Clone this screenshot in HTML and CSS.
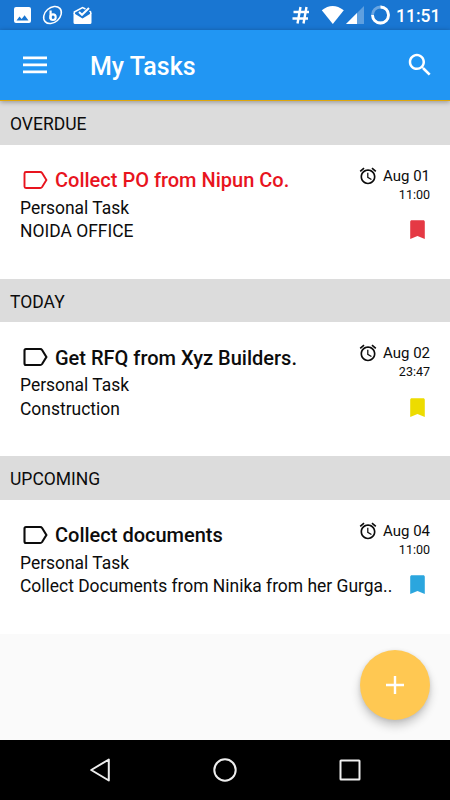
FILE: index.html
```html
<!DOCTYPE html>
<html lang="en">
<head>
<meta charset="utf-8">
<title>My Tasks</title>
<link rel="stylesheet" href="styles.css">
</head>
<body>
<svg class="defs" aria-hidden="true">
  <symbol id="alarm" viewBox="0 0 24 24"><path d="M22 5.72l-4.6-3.86-1.29 1.53 4.6 3.86L22 5.72zM7.88 3.39L6.6 1.86 2 5.71l1.29 1.53 4.59-3.85zM12.5 8H11v6l4.75 2.85.75-1.23-4-2.37V8zM12 4c-4.97 0-9 4.03-9 9s4.02 9 9 9c4.97 0 9-4.03 9-9s-4.03-9-9-9zm0 16c-3.87 0-7-3.13-7-7s3.13-7 7-7 7 3.13 7 7-3.13 7-7 7z"/></symbol>
  <symbol id="label" viewBox="0 0 30 30"><path d="M6 7H20.200Q21.400 7 22.100 8L26.400 15L22.100 22Q21.400 23 20.200 23H6Q4.500 23 4.500 21.500V8.500Q4.500 7 6 7Z"/></symbol>
  <symbol id="bookmark" viewBox="0 0 24 24"><path d="M17.500 3H6.500c-.900 0-1.500.600-1.500 1.500V21l7-2.700 7 2.700V4.500c0-.900-.600-1.500-1.500-1.500z"/></symbol>
</svg>
<div class="screen">
  <div class="status">
    <svg class="status-left" width="92" height="30" viewBox="0 0 92 30">
      <path fill="#fff" fill-rule="evenodd" d="M16 7H29Q31 7 31 9V21Q31 23 29 23H16Q14 23 14 21V9Q14 7 16 7ZM16.500 20.500H28.500L24.600 15.200L21.700 19L19.500 16.500Z"/>
      <g fill="none" stroke="#fff">
        <ellipse cx="52.500" cy="15" rx="9.900" ry="7.400" stroke-width="1.500" transform="rotate(-42 52.500 15)"/>
        <path stroke-width="2.200" d="M50.600 10.500V19"/>
        <ellipse cx="53" cy="17.200" rx="2.700" ry="2.800" stroke-width="2.100"/>
      </g>
      <path fill="#fff" d="M73.500 13L82.500 18.500L91.500 13V22.500Q91.500 24 90 24H75Q73.500 24 73.500 22.500Z"/>
      <path fill="none" stroke="#fff" stroke-width="1.500" d="M74.300 14V12L82.500 7.500L85.500 9M90.700 14V12L89.500 11"/>
      <path fill="none" stroke="#fff" stroke-width="2" d="M79 12L82 14.800L89 8"/>
    </svg>
    <div class="status-right">
      <svg width="106" height="30" viewBox="290 0 106 30">
        <g fill="none" stroke="#fff" stroke-width="2.400">
          <path d="M297.500 23.500L300.500 7M303.500 23.500L306.500 7M293.500 12H309M292.500 18.500H308"/>
          <circle cx="380.500" cy="15" r="8" stroke-width="2.800" opacity=".35"/>
          <path stroke-width="2.800" d="M380.500 7A8 8 0 1 1 372.500 15"/>
        </g>
        <path fill="#fff" d="M321.800 10.300Q332.500 1.800 343.800 10.300L332.800 24Z"/>
        <path fill="#fff" opacity=".3" d="M364 6V24H346Z"/>
        <path fill="#fff" d="M357 13V24H346Z"/>
      </svg>
      <span class="clock">11:51</span>
    </div>
  </div>
  <header class="toolbar">
    <svg class="menu" width="24" height="18" viewBox="0 0 24 18"><path fill="#fff" d="M0 .5H24V3.200H0ZM0 7.500H24V10.200H0ZM0 14.500H24V17.200H0Z"/></svg>
    <h1 class="title">My Tasks</h1>
    <svg class="search" width="30" height="30" viewBox="0 0 24 24"><path fill="#fff" d="M15.500 14h-.790l-.280-.270C15.410 12.590 16 11.110 16 9.500 16 5.910 13.090 3 9.500 3S3 5.910 3 9.500 5.910 16 9.500 16c1.610 0 3.090-.590 4.230-1.570l.270.280v.790l5 4.990L20.490 19l-4.990-5zm-6 0C7.010 14 5 11.990 5 9.500S7.010 5 9.500 5 14 7.010 14 9.500 11.990 14 9.500 14z"/></svg>
  </header>
  <main class="list">
    <h2 class="section first">OVERDUE</h2>
    <article class="task">
      <div class="info">
        <h3 class="name overdue"><svg class="label"><use href="#label"/></svg>Collect PO from Nipun Co.</h3>
        <p>Personal Task</p>
        <p>NOIDA OFFICE</p>
      </div>
      <div class="meta">
        <div class="date"><svg class="alarm"><use href="#alarm"/></svg>Aug 01</div>
        <div class="time">11:00</div>
        <svg class="bookmark red"><use href="#bookmark"/></svg>
      </div>
    </article>
    <h2 class="section">TODAY</h2>
    <article class="task">
      <div class="info">
        <h3 class="name"><svg class="label"><use href="#label"/></svg>Get RFQ from Xyz Builders.</h3>
        <p>Personal Task</p>
        <p>Construction</p>
      </div>
      <div class="meta">
        <div class="date"><svg class="alarm"><use href="#alarm"/></svg>Aug 02</div>
        <div class="time">23:47</div>
        <svg class="bookmark yellow"><use href="#bookmark"/></svg>
      </div>
    </article>
    <h2 class="section">UPCOMING</h2>
    <article class="task">
      <div class="info">
        <h3 class="name"><svg class="label"><use href="#label"/></svg>Collect documents</h3>
        <p>Personal Task</p>
        <p>Collect Documents from Ninika from her Gurga..</p>
      </div>
      <div class="meta">
        <div class="date"><svg class="alarm"><use href="#alarm"/></svg>Aug 04</div>
        <div class="time">11:00</div>
        <svg class="bookmark blue"><use href="#bookmark"/></svg>
      </div>
    </article>
  </main>
  <button class="fab" aria-label="Add task"><svg width="18" height="18" viewBox="0 0 18 18"><path fill="#fff" d="M7.800 0H10.200V7.800H18V10.200H10.200V18H7.800V10.200H0V7.800H7.800Z"/></svg></button>
  <nav class="navbar">
    <svg width="24" height="26" viewBox="0 0 24 26"><path d="M20.800 2.500V23.500L3.200 13Z"/></svg>
    <svg width="24" height="26" viewBox="0 0 24 26"><circle cx="12" cy="13" r="10.700"/></svg>
    <svg width="24" height="26" viewBox="0 0 24 26"><rect x="2.500" y="3.500" width="19" height="19" rx=".5"/></svg>
  </nav>
</div>
</body>
</html>
```
FILE: styles.css
```css
* { box-sizing: border-box; }
body, h1, h2, h3, p { margin: 0; }
body { font-family: Roboto, "Liberation Sans", sans-serif; color: #0c0c0c; }
svg { display: block; flex: none; }
.defs { position: absolute; width: 0; height: 0; }
.screen {
  position: relative;
  width: 450px;
  height: 800px;
  overflow: hidden;
  display: flex;
  flex-direction: column;
  background: #fafafa;
}
.status {
  display: flex;
  justify-content: space-between;
  height: 30px;
  flex: none;
  background: #1976d2;
}
.status-right { display: flex; width: 160px; }
.clock {
  color: #fff;
  font-size: 17.500px;
  line-height: 32px;
  font-weight: 500;
  white-space: nowrap;
}
.toolbar {
  display: flex;
  align-items: center;
  height: 71px;
  flex: none;
  padding: 0 15px 0 23px;
  background: #2196f3;
  border-bottom: 1.500px solid #dea60c;
  box-shadow: 0 1px 5px rgba(0, 0, 0, .35);
  z-index: 1;
}
.title {
  flex: 1;
  margin-left: 43px;
  padding-top: 3px;
  color: #fff;
  font-size: 25px;
  line-height: 30px;
  font-weight: 500;
}
.section {
  height: 43.500px;
  padding: 1px 10px 0;
  background: #dcdcdc;
  font-size: 17.500px;
  line-height: 44px;
  font-weight: 400;
}
.section.first { height: 43.750px; line-height: 44.500px; }
.task {
  display: flex;
  justify-content: space-between;
  height: 134px;
  padding: 20px 20px 0;
  background: #fff;
}
.info { white-space: nowrap; }
.name {
  display: flex;
  align-items: center;
  gap: 5px;
  height: 31px;
  font-size: 20px;
  font-weight: 500;
}
.label { width: 30px; height: 30px; margin-bottom: 1px; fill: none; stroke: currentColor; stroke-width: 2.100px; }
.overdue { color: #e8141e; }
.overdue .label { stroke-width: 1.900px; }
.info p { padding-top: 1px; font-size: 17.450px; line-height: 22.500px; }
.meta { display: flex; flex-direction: column; align-items: flex-end; flex: none; width: 75px; margin-left: -75px; }
.date { display: flex; align-items: center; gap: 5px; height: 22px; font-size: 15px; white-space: nowrap; }
.alarm { width: 20px; height: 20px; fill: currentColor; }
.time { height: 15px; font-size: 12.500px; line-height: 15px; }
.bookmark { width: 25px; height: 25px; margin-top: 15.500px; }
.red { fill: #e53944; }
.yellow { fill: #eddc00; }
.blue { fill: #2ba6de; }
.fab {
  position: absolute;
  right: 20px;
  top: 650px;
  display: grid;
  place-items: center;
  width: 70px;
  height: 70px;
  padding: 0;
  border: 0;
  border-radius: 50%;
  background: #ffc852;
  box-shadow: 0 6px 10px rgba(0, 0, 0, .2), 0 1px 4px rgba(0, 0, 0, .1);
}
.navbar {
  display: flex;
  justify-content: space-between;
  align-items: center;
  height: 60px;
  flex: none;
  margin-top: auto;
  padding: 0 88px;
  background: #000;
}
.navbar svg { fill: none; stroke: #eee; stroke-width: 2px; stroke-linejoin: round; }
```
